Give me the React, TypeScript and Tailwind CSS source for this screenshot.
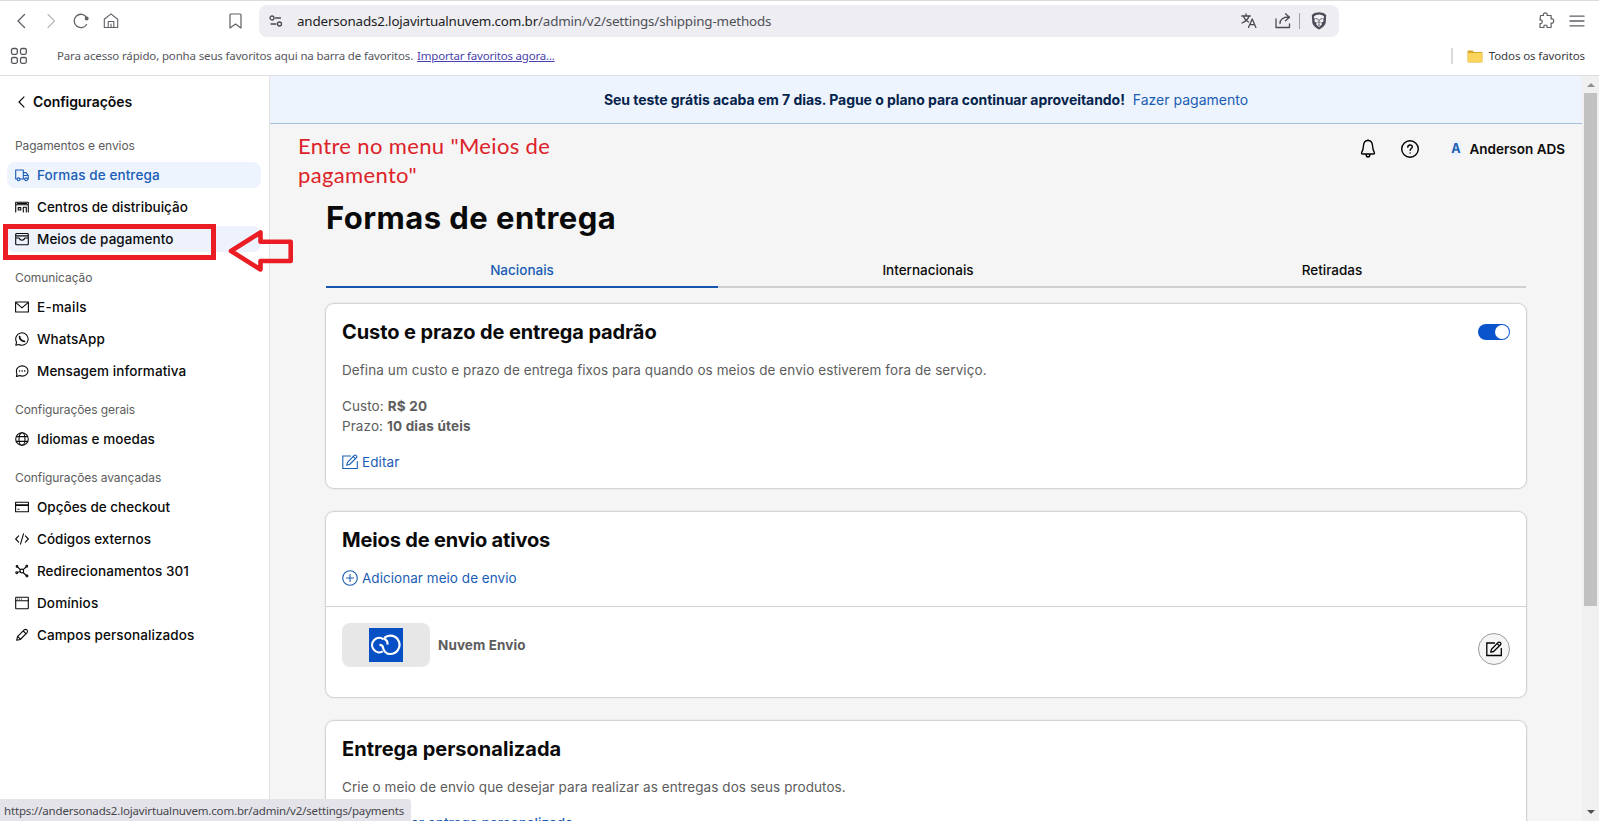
import React from "react";

type IconProps = { children: React.ReactNode; className?: string; box?: string; sw?: number };

function Glyph({ children, className = "size-3.5", box = "0 0 14 14", sw = 1.1 }: IconProps) {
  return (
    <svg viewBox={box} className={`${className} shrink-0`} fill="none" stroke="currentColor" strokeWidth={sw} strokeLinejoin="round" strokeLinecap="round">
      {children}
    </svg>
  );
}

const icons = {
  truck: (
    <>
      <path d="M2.2 11H.7V2h7.6v9H5.1M8.3 4.6h2.6l2.4 2.8V11h-.8M9.8 11H8.3M8.5 7.5h4.6" />
      <circle cx="3.6" cy="11.3" r="1.4" />
      <circle cx="11.1" cy="11.3" r="1.4" />
    </>
  ),
  warehouse: (
    <>
      <path d="M.7 12V2.2h12.6V12M1 4.8h12M2.4 3.5h9.2M8.3 12V7.2h3V12" />
      <rect x="3.2" y="7.6" width="2.6" height="2.4" />
    </>
  ),
  wallet: (
    <path d="M.7 6V2.4a.9.9 0 0 1 .9-.9h10.8a.9.9 0 0 1 .9.9V12a.7.7 0 0 1-.7.7H1.4a.7.7 0 0 1-.7-.7V6h3.4c.5 1.6 1.4 2.2 2.9 2.2S9.4 7.6 9.9 6h3.4M.9 3.9h12.2" />
  ),
  mail: (
    <>
      <rect x=".6" y="2" width="12.8" height="10" />
      <path d="M1 2.6l6 5.2 6-5.2" />
    </>
  ),
  whatsapp: (
    <>
      <path d="M.8 13.2l.8-3A6.2 6.2 0 1 1 4 12.5z" />
      <path d="M4.6 4.5c-.2 2.5 2.4 5 4.9 4.9" strokeWidth="1.7" />
    </>
  ),
  message: (
    <>
      <path d="M1.4 12.5l.6-2.6A5.3 5.3 0 0 1 1.4 7.1C1.4 4.1 4 1.9 7.2 1.9s5.8 2.2 5.8 5.1-2.6 5.1-5.8 5.1c-.9 0-1.8-.2-2.5-.5z" />
      <path d="M4.5 7h.1M7.1 7h.1M9.7 7h.1" strokeWidth="1.5" />
    </>
  ),
  globe: (
    <>
      <circle cx="7" cy="7" r="6.3" />
      <ellipse cx="7" cy="7" rx="3" ry="6.3" />
      <path d="M1.4 4.6h11.2M1.4 9.4h11.2" />
    </>
  ),
  card: (
    <>
      <rect x=".6" y="2.2" width="12.8" height="9.6" />
      <path d="M.6 4.9h12.8M.6 5.5h12.8M3 9.3h1" />
    </>
  ),
  code: <path d="M3.6 3.9L.7 7l2.9 3.1M10.4 3.9L13.3 7l-2.9 3.1M8.5 1.9l-3 10.2" />,
  nodes: (
    <>
      <circle cx="6.8" cy="7" r="1.9" />
      <circle cx="2" cy="2.4" r=".8" />
      <circle cx="1.7" cy="8.7" r=".9" />
      <circle cx="11.8" cy="2.3" r=".9" />
      <circle cx="12" cy="12" r=".9" />
      <path d="M2.6 3l2.7 2.7M2.6 8.4L5 7.6M8.2 5.7L11 3M8 8.5l3.3 3" />
    </>
  ),
  browser: (
    <>
      <rect x=".7" y="1.3" width="12.6" height="11.4" rx=".5" />
      <path d="M.8 4.7h12.4M2.6 3h.1M4.6 3h.1M6.6 3h.1" />
    </>
  ),
  pencil: <path d="M1.7 12.3l.8-3.6 6.7-6.8c1.9-1.5 4.3.7 2.9 2.8L5.3 11.5zM8.3 3l2.8 2.8M3.2 8.800l2 2" />,
};

function EditIcon({ className = "size-4", sw = 1.1 }: { className?: string; sw?: number }) {
  return (
    <Glyph className={className} box="0 0 16 16" sw={sw}>
      <path d="M8.500 2H.8v12.500h14.500V7.500" strokeLinejoin="miter" />
      <path d="M4.700 11.200l.8-2.900 6.700-6.900c1.400-1 3.400.7 2.300 2.300l-6.900 6.800zM11.300 2.600l2 2" />
    </Glyph>
  );
}

function PlusCircle() {
  return (
    <Glyph box="0 0 16 16" className="size-4">
      <circle cx="8" cy="8" r="7.3" />
      <path d="M8 4.500v7M4.500 8h7" />
    </Glyph>
  );
}

type Item = { label: string; icon: React.ReactNode; state?: "active" | "hover"; track?: string };

const groups: { title: string; items: Item[] }[] = [
  {
    title: "Pagamentos e envios",
    items: [
      { label: "Formas de entrega", icon: icons.truck, state: "active", track: "tracking-[0.1px]" },
      { label: "Centros de distribuição", icon: icons.warehouse, track: "tracking-[0.02px]" },
      { label: "Meios de pagamento", icon: icons.wallet, state: "hover" },
    ],
  },
  {
    title: "Comunicação",
    items: [
      { label: "E-mails", icon: icons.mail, track: "tracking-[0.25px]" },
      { label: "WhatsApp", icon: icons.whatsapp },
      { label: "Mensagem informativa", icon: icons.message },
    ],
  },
  {
    title: "Configurações gerais",
    items: [{ label: "Idiomas e moedas", icon: icons.globe }],
  },
  {
    title: "Configurações avançadas",
    items: [
      { label: "Opções de checkout", icon: icons.card, track: "tracking-[0px]" },
      { label: "Códigos externos", icon: icons.code, track: "tracking-[0px]" },
      { label: "Redirecionamentos 301", icon: icons.nodes },
      { label: "Domínios", icon: icons.browser, track: "tracking-[0.13px]" },
      { label: "Campos personalizados", icon: icons.pencil, track: "tracking-[0.09px]" },
    ],
  },
];

function Sidebar() {
  return (
    <aside className="relative w-[270px] shrink-0 border-r border-[#e2e2e2] bg-white">
      <div className="flex h-[51px] items-center gap-2 pl-[18px] text-[14px] font-semibold tracking-[-0.08px] text-[#0a0a0a]">
        <svg viewBox="0 0 7 12" className="h-3 w-[7px]" fill="none" stroke="currentColor" strokeWidth="1.2">
          <path d="M6.300.7L1 6l5.300 5.300" />
        </svg>
        <span>Configurações</span>
      </div>
      <nav className="flex flex-col gap-4 pt-[9px]">
        {groups.map((g) => (
          <div key={g.title} className="flex flex-col gap-1.5">
            <h3 className="h-5 pl-[15px] text-[12px] leading-5 tracking-[-0.08px] text-[#5d5d5d]">{g.title}</h3>
            {g.items.map((it) => (
              <a
                key={it.label}
                className={`mr-2 ml-[7px] flex h-[26px] items-center gap-2 rounded-lg pl-2 text-[13.5px] font-medium whitespace-nowrap ${it.track ?? "tracking-[0.06px]"} ${
                  it.state === "active" ? "bg-[#edf4fe] text-[#1a5db4]" : it.state === "hover" ? "bg-[#edf2fc] text-[#0a0a0a]" : "text-[#0a0a0a]"
                }`}
              >
                <Glyph>{it.icon}</Glyph>
                <span>{it.label}</span>
              </a>
            ))}
          </div>
        ))}
      </nav>
      <div className="absolute top-[148px] left-[3px] h-9 w-[213px] border-[5px] border-[#ea1c24]" />
      <svg viewBox="0 0 66 44" className="absolute top-[153px] left-[228px] z-10 h-11 w-[66px]" fill="none" stroke="#ea1c24" strokeWidth="4.6" strokeLinejoin="round">
        <path d="M3 22L32.500 3.500v9.300H62.700v19.200H32.500v8.500z" />
      </svg>
    </aside>
  );
}

function BrowserBar() {
  return (
    <header className="h-[76px] shrink-0 border-t border-b border-t-[#dcdcdc] border-b-[#dfdfe2] bg-white font-['Noto_Sans','Open_Sans',sans-serif] text-[#5f6066]">
      <div className="flex h-10 items-center">
        <div className="flex w-[259px] shrink-0 items-center pl-4">
          <Glyph box="0 0 16 16" className="mr-[14px] size-4" sw={1.3}>
            <path d="M8.500 1.500L2 8l6.500 6.500" />
          </Glyph>
          <span className="mr-[11px] text-[#b9babd]">
            <Glyph box="0 0 16 16" className="size-4" sw={1.3}>
              <path d="M2 1.500L8.500 8 2 14.500" />
            </Glyph>
          </span>
          <Glyph box="0 0 16 16" className="mr-[14px] size-4" sw={1.3}>
            <path d="M13.600 11.500A6.700 6.700 0 1 1 13.500 4.300" />
            <circle cx="13.7" cy="5.5" r="1.3" fill="currentColor" />
          </Glyph>
          <Glyph box="0 0 16 16" className="size-4" sw={1.1}>
            <path d="M1.300 6.200L8 .9l6.700 5.300v8.300H1.300z" />
            <path d="M5.200 14.500V8.500h5.600v6" />
            <path d="M8 11v3.500" />
          </Glyph>
          <Glyph box="0 0 14 16" className="ml-[110px] h-4 w-3.5" sw={1.2}>
            <path d="M2 1h9a1 1 0 0 1 1 1v13l-5.500-4L1 15V2a1 1 0 0 1 1-1z" />
          </Glyph>
        </div>
        <div className="flex h-8 w-[1080px] shrink-0 items-center rounded-lg bg-[#ededf2] pr-3 pl-2.5 text-[#4a4b52]">
          <Glyph box="0 0 14 14" className="size-3.5" sw={1.3}>
            <circle cx="3" cy="4" r="2" />
            <circle cx="10.5" cy="10" r="2" />
            <path d="M6.500 4h5M2 10h5" />
          </Glyph>
          <span className="ml-[14px] text-[13.4px] tracking-[-0.17px] whitespace-nowrap text-[#4f5056]">
            <span className="text-[#1d1e22]">andersonads2.lojavirtualnuvem.com.br</span>/admin/v2/settings/shipping-methods
          </span>
          <span className="ml-auto flex items-center">
            <Glyph box="0 0 16 16" className="size-4" sw={1.3}>
              <path d="M.8 3h8.600M5 1v2M8 3C7 6.500 4.500 8.500 1 10M2.500 3.500C3.500 6.500 6 8.200 7.500 9M7.500 14.500l3.700-8.500 3.700 8.500M8.800 11.700h4.800" />
            </Glyph>
            <Glyph box="0 0 16 16" className="ml-[18px] size-4" sw={1.3}>
              <path d="M1 6v8.500h13.500V11M5 10.500c0-4 3-6.500 9-6.500M10.500.8l4 3.400-4 3.600" />
            </Glyph>
            <span className="ml-2 h-4 w-px bg-[#9fa0a8]" />
            <svg viewBox="0 0 16 18" className="ml-[11px] h-[18px] w-4">
              <path d="M3.500 1L8 .3l4.500.7 2.700 2-.5 7.500c-.5 3.500-4 5.500-6.700 7-2.700-1.500-6.200-3.500-6.700-7L.8 3z" fill="#4b4c57" />
              <path d="M4.500 3.300L8 2.600l3.500.7 1.700 1.500-1 2.500.3 2.200-2.200 1.200.5 1.700L8 15l-2.800-2.600.5-1.700-2.200-1.200.3-2.200-1-2.500z" fill="#f3f3f6" />
              <path d="M4.500 6.500l2.300.7M11.500 6.500l-2.300.7M8 7v3M6.500 10.200L8 11.200l1.500-1M7 13h2" stroke="#4b4c57" strokeWidth="1" fill="none" />
            </svg>
          </span>
        </div>
        <Glyph box="0 0 18 18" className="ml-[198px] size-[18px]" sw={1.2}>
          <path d="M3.500 3.500h3C5.700 1.800 7 .9 8.300.9s2.500 1 1.800 2.600h4V7c1.600-.7 2.600.6 2.600 2s-1 2.500-2.600 2v4.500H10c.5-1.500-.3-2.500-1.500-2.500S6.500 14 7 15.500H3v-4c1.500.3 2.300-.6 2.300-1.800S4.500 7.500 3 8z" />
        </Glyph>
        <Glyph box="0 0 16 14" className="ml-[14px] h-3.5 w-4" sw={1.3}>
          <path d="M1 2.200h14M1 7h14M1 11.800h14" />
        </Glyph>
      </div>
      <div className="flex h-[30px] items-center text-[11.5px] tracking-[-0.15px] text-[#55565c]">
        <svg viewBox="0 0 18 18" className="ml-2.5 size-[18px]" fill="none" stroke="#55565c" strokeWidth="1.3">
          <rect x="1.5" y="1.5" width="5.8" height="5.8" rx="1.5" />
          <rect x="10.5" y="1.5" width="5.8" height="5.8" rx="1.5" />
          <rect x="1.5" y="10.5" width="5.8" height="5.8" rx="1.5" />
          <rect x="10.5" y="10.5" width="5.8" height="5.8" rx="1.5" />
        </svg>
        <span className="ml-[29px]">Para acesso rápido, ponha seus favoritos aqui na barra de favoritos.</span>
        <a className="ml-1 tracking-[-0.2px] text-[#4a3fae] underline">Importar favoritos agora...</a>
        <span className="mr-[14px] ml-auto h-4 w-0.5 bg-[#d9d9de]" />
        <svg viewBox="0 0 16 13" className="mr-1.5 h-[13px] w-4">
          <path d="M.5 1.500a1 1 0 0 1 1-1h4l1.500 1.500h7.500a1 1 0 0 1 1 1v8.500a1 1 0 0 1-1 1h-13a1 1 0 0 1-1-1z" fill="#d9a82b" />
          <rect x="1" y="3" width="14" height="9" rx=".6" fill="#fbd45c" />
        </svg>
        <span className="mr-[14px] tracking-[-0.1px] text-[#3a3b40]">Todos os favoritos</span>
      </div>
    </header>
  );
}

function Card({ children, className = "" }: { children: React.ReactNode; className?: string }) {
  return <section className={`shrink-0 rounded-lg bg-white shadow-[0_0_0_1px_#d4d4d4,0_0_2px_1px_#dedede] ${className}`}>{children}</section>;
}

function Main() {
  return (
    <div className="relative flex min-w-0 flex-1 flex-col bg-[#f5f5f5]">
      <div className="flex h-12 shrink-0 items-center justify-center gap-2 border-b border-[#a4c1e0] bg-[#edf4fe] pb-px text-[14px]">
        <span className="font-bold tracking-[-0.05px] text-[#06234c]">Seu teste grátis acaba em 7 dias. Pague o plano para continuar aproveitando!</span>
        <a className="text-[#1a5db4]">Fazer pagamento</a>
      </div>
      <div className="flex h-[50px] shrink-0 items-center justify-end pr-[17px]">
        <Glyph box="0 0 18 20" className="mr-[23px] h-5 w-[18px] text-black" sw={1.4}>
          <path d="M9 1.500c-3 0-4.300 2.200-4.500 5-.2 4-.8 5.500-2 7.500 0 .8.500 1 1 1h11c.5 0 1-.2 1-1-1.200-2-1.800-3.500-2-7.500-.2-2.800-1.500-5-4.500-5zM7.200 15.500c0 3.300 3.600 3.300 3.600 0M9 .8v.7" />
        </Glyph>
        <Glyph box="0 0 20 20" className="mr-[31px] size-5 text-black" sw={1.4}>
          <circle cx="10" cy="10" r="8.3" />
          <path d="M7.800 8.200c.1-3 4.500-2.800 4.500-.2 0 1.500-2.200 1.600-2.200 3.400M10.100 13.900v.1" />
        </Glyph>
        <span className="mr-[9px] rounded-full bg-[#e9f2fe] text-[12.5px] font-bold text-[#1a5db4]">A</span>
        <span className="text-[13.5px] font-semibold text-[#0a0a0a]">Anderson ADS</span>
      </div>
      <div className="mx-14 flex min-h-0 flex-1 flex-col">
        <h1 className="mt-6 h-10 shrink-0 text-[31px] leading-10 font-bold tracking-[0.45px] text-[#0a0a0a]">Formas de entrega</h1>
        <div className="mt-3 flex h-[38px] shrink-0 text-center text-[13.5px] leading-10 font-medium text-[#0a0a0a]">
          <div className="w-[392px] border-b-2 border-[#1557ae] text-[#1a5db4]">Nacionais</div>
          <div className="w-[420px] border-b-2 border-[#cfcfcf]">Internacionais</div>
          <div className="flex-1 border-b-2 border-[#cfcfcf]">Retiradas</div>
        </div>
        <Card className="mt-4 h-[184px] px-4 pt-4 text-[13.5px] leading-5 tracking-[0.085px] text-[#5d5d5d]">
          <div className="flex h-6 items-center justify-between">
            <h2 className="text-[20px] font-bold tracking-[-0.1px] text-[#0a0a0a]">Custo e prazo de entrega padrão</h2>
            <span className="flex h-4 w-8 justify-end rounded-full bg-[#0a55cc] p-px">
              <span className="size-3.5 rounded-full bg-white" />
            </span>
          </div>
          <p className="mt-4">Defina um custo e prazo de entrega fixos para quando os meios de envio estiverem fora de serviço.</p>
          <p className="mt-4">
            Custo: <b className="font-bold tracking-[0.25px]">R$ 20</b>
          </p>
          <p>
            Prazo: <b className="font-bold tracking-[0.2px]">10 dias úteis</b>
          </p>
          <a className="mt-4 flex items-center gap-1 text-[#1a5db4]">
            <EditIcon />
            <span>Editar</span>
          </a>
        </Card>
        <Card className="mt-6 h-[185px]">
          <div className="h-[95px] border-b border-[#d2d2d2] px-4 pt-4">
            <h2 className="text-[20px] leading-6 font-bold tracking-[-0.15px] text-[#0a0a0a]">Meios de envio ativos</h2>
            <a className="mt-4 flex items-center gap-1 text-[13.5px] leading-5 tracking-[0.04px] text-[#1a5db4]">
              <PlusCircle />
              <span>Adicionar meio de envio</span>
            </a>
          </div>
          <div className="flex items-center px-4 pt-4">
            <span className="flex h-11 w-[88px] items-center justify-center rounded-lg bg-[#e7e7e7]">
              <svg viewBox="0 0 34 34" className="size-[34px]" fill="none" stroke="#fff" strokeWidth="2.2">
                <rect width="34" height="34" fill="#0550c4" stroke="none" />
                <path d="M13.800 23.400A7.200 7.200 0 1 1 14.600 11.300" />
                <path d="M10.500 16.800c2.600 0 3.600 1.200 3.600 3.400C15.200 23.800 17.900 26 21.200 26a9.200 9.200 0 1 0-5.900-16.200M14.800 10.600c2.600 1 4 3.200 3.700 6" />
              </svg>
            </span>
            <span className="ml-2 text-[13.5px] font-bold tracking-[0.1px] text-[#5d5d5d]">Nuvem Envio</span>
            <span className="mt-2 ml-auto flex size-8 items-center justify-center rounded-full border border-[#9d9d9d] bg-[#f5f5f5] text-black">
              <EditIcon sw={1.3} />
            </span>
          </div>
        </Card>
        <Card className="mt-6 h-[190px] px-4 pt-4">
          <h2 className="text-[20px] leading-6 font-bold tracking-[0.02px] text-[#0a0a0a]">Entrega personalizada</h2>
          <p className="mt-4 text-[13.5px] leading-5 tracking-[0.08px] text-[#5d5d5d]">Crie o meio de envio que desejar para realizar as entregas dos seus produtos.</p>
          <a className="mt-4 flex items-center gap-1 text-[13.5px] leading-5 font-medium tracking-[0.06px] text-[#1a5db4]">
            <PlusCircle />
            <span>Adicionar entrega personalizada</span>
          </a>
        </Card>
      </div>
      <div className="absolute top-[55px] left-[28px] font-[Lato,sans-serif] text-[22px] leading-[29px] tracking-[0.35px] whitespace-nowrap text-[#dd2229]">
        <p>Entre no menu "Meios de</p>
        <p>pagamento"</p>
      </div>
    </div>
  );
}

export default function App() {
  return (
    <div className="relative flex h-[821px] w-[1599px] flex-col overflow-hidden font-[Inter,sans-serif]">
      <BrowserBar />
      <div className="flex min-h-0 flex-1">
        <Sidebar />
        <Main />
        <div className="flex w-[17px] shrink-0 flex-col items-center bg-[#f0f0f0]">
          <span className="mt-[7px] border-x-4 border-b-4 border-x-transparent border-b-[#909090]" />
          <span className="mt-1.5 h-[513px] w-[13px] bg-[#c1c1c1]" />
          <span className="mt-auto mb-[7px] border-x-4 border-t-4 border-x-transparent border-t-[#505050]" />
        </div>
      </div>
      <div className="absolute bottom-0 left-0 z-20 flex h-[22px] w-[411px] items-center rounded-tr bg-[#e4e3e9] pt-0.5 pl-1 font-['Noto_Sans',sans-serif] text-[11.5px] tracking-[-0.17px] whitespace-nowrap text-[#45464c]">
        https://andersonads2.lojavirtualnuvem.com.br/admin/v2/settings/payments
      </div>
    </div>
  );
}
